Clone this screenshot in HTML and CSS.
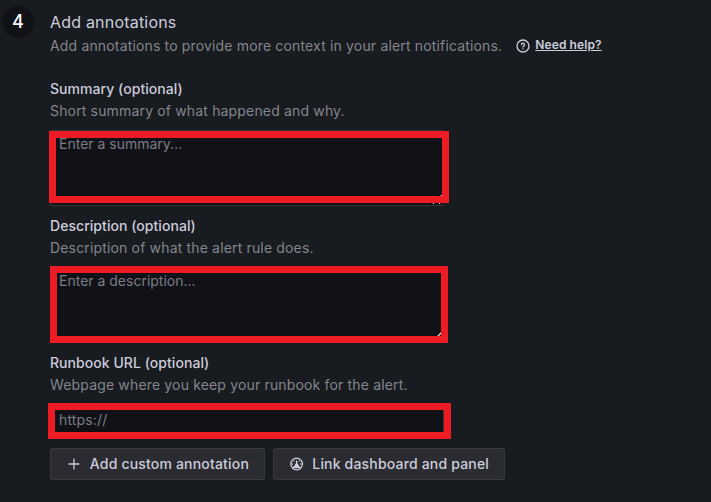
FILE: index.html
```
<!DOCTYPE html>
<html lang="en">
<head>
  <meta charset="UTF-8">
  <title>Add annotations</title>
  <link rel="stylesheet" href="styles.css">
</head>
<body>
  <section class="step">
    <div class="step-number">4</div>
    <div class="step-content">
      <h3>Add annotations</h3>
      <div class="step-info">
        <span class="description">Add annotations to provide more context in your alert notifications.</span>
        <div class="help">
          <svg width="14" height="14" viewBox="0 0 14 14" fill="none" stroke="currentColor">
            <circle cx="7" cy="7" r="6" stroke-width="1.3"/>
            <path d="M5.5 5.6a1.5 1.5 0 1 1 2.3 1.3c-.5.3-.8.5-.8 1.1" stroke-width="1.3" stroke-linecap="round"/>
            <circle cx="7" cy="9.9" r=".75" fill="currentColor" stroke="none"/>
          </svg>
          <a href="#">Need help?</a>
        </div>
      </div>

      <div class="field">
        <label for="summary">Summary (optional)</label>
        <span class="description">Short summary of what happened and why.</span>
        <div class="control">
          <textarea id="summary" placeholder="Enter a summary..."></textarea>
          <svg class="grip" width="12" height="12" viewBox="0 0 12 12">
            <path d="M0 12L12 0V12Z" fill="#000"/>
            <path d="M3 12L12 3M9 12L12 9" stroke="#c8c8c8" stroke-width="1.1"/>
          </svg>
          <div class="highlight highlight-summary"></div>
        </div>
      </div>

      <div class="field">
        <label for="description">Description (optional)</label>
        <span class="description">Description of what the alert rule does.</span>
        <div class="control">
          <textarea id="description" placeholder="Enter a description..."></textarea>
          <svg class="grip" width="12" height="12" viewBox="0 0 12 12">
            <path d="M0 12L12 0V12Z" fill="#000"/>
            <path d="M3 12L12 3M9 12L12 9" stroke="#c8c8c8" stroke-width="1.6"/>
          </svg>
          <div class="highlight highlight-description"></div>
        </div>
      </div>

      <div class="field">
        <label for="runbook">Runbook URL (optional)</label>
        <span class="description">Webpage where you keep your runbook for the alert.</span>
        <div class="control">
          <input id="runbook" type="text" placeholder="https://">
          <div class="highlight highlight-runbook"></div>
        </div>
      </div>

      <div class="buttons">
        <button type="button" class="btn-add">
          <svg width="16" height="16" viewBox="0 0 16 16" fill="none" stroke="currentColor" stroke-width="1.3" stroke-linecap="round">
            <path d="M8 3v10M3 8h10"/>
          </svg>
          Add custom annotation
        </button>
        <button type="button" class="btn-link">
          <svg width="16" height="16" viewBox="0 0 16 16" fill="none" stroke="currentColor" stroke-width="1.4">
            <circle cx="8" cy="8" r="6.1"/>
            <path d="M8 4.8v4M4 12.200L6.700 9.900M12 12.200L9.300 9.900M6 11.700h4" stroke-linecap="round"/>
            <circle cx="8" cy="9.300" r="1.300" fill="currentColor"/>
            <g fill="currentColor" stroke="none">
              <circle cx="5.300" cy="5" r=".7"/>
              <circle cx="10.700" cy="5" r=".7"/>
              <circle cx="3.600" cy="8" r=".8"/>
              <circle cx="12.400" cy="8" r=".8"/>
            </g>
          </svg>
          Link dashboard and panel
        </button>
      </div>
    </div>
  </section>
</body>
</html>
```

FILE: styles.css
```
html, body {
  margin: 0;
  padding: 0;
  height: 100%;
  overflow: hidden;
}

body {
  background-color: #181b1f;
  color: #ccccdc;
  font-family: Inter, sans-serif;
  font-size: 14px;
  line-height: 22px;
  letter-spacing: 0.16px;
}

.step {
  display: flex;
  gap: 16px;
  padding: 6px 0 0 2px;
}

.step-number {
  width: 32px;
  height: 32px;
  border-radius: 50%;
  background-color: #111217;
  color: #fff;
  font-size: 18px;
  font-weight: 500;
  line-height: 32px;
  text-align: center;
}

.step-content {
  padding-top: 5px;
}

h3 {
  margin: 0 0 2px;
  font-size: 16px;
  font-weight: 400;
  line-height: 22px;
  letter-spacing: 0.2px;
}

.step-info {
  display: flex;
  align-items: center;
  gap: 14px;
  margin-bottom: 21px;
}

.description {
  color: #84858e;
}

.help {
  display: flex;
  align-items: center;
  gap: 5px;
}

.help a {
  color: inherit;
  font-size: 12px;
  font-weight: 600;
  line-height: 20px;
  letter-spacing: 0.1px;
  padding-bottom: 2px;
}

.field {
  display: flex;
  flex-direction: column;
  margin-bottom: 9px;
}

label {
  font-weight: 500;
  letter-spacing: 0.05px;
}

.control {
  position: relative;
  display: flex;
  width: 394px;
  margin-top: 8px;
}

textarea, input {
  box-sizing: border-box;
  width: 100%;
  border: 1px solid #34353b;
  border-radius: 2px;
  background-color: #111217;
  color: #ccccdc;
  font: inherit;
  letter-spacing: 0;
  outline: none;
}

textarea {
  height: 76px;
  padding: 2px 8px;
  resize: none;
}

input {
  height: 32px;
  padding: 0 8px 2px;
  letter-spacing: 0.15px;
}

::placeholder {
  color: #7b7c85;
}

.grip {
  position: absolute;
  right: 2px;
  bottom: 2px;
}

/* red frames drawn over the inputs */
.highlight {
  position: absolute;
  border: 7px solid #ed1c24;
  pointer-events: none;
}

.highlight-summary {
  inset: 1px -5px 3px -1px;
}

.highlight-description {
  inset: -1px -4px 0 0;
}

.highlight-runbook {
  inset: -1px -7px -3px -2px;
}

.buttons {
  display: flex;
  gap: 8px;
  margin-top: 12px;
}

button {
  box-sizing: border-box;
  display: flex;
  align-items: center;
  gap: 8px;
  height: 32px;
  padding: 0 15px;
  border: 1px solid #38393f;
  border-radius: 2px;
  background-color: #2b2c31;
  color: #ccccdc;
  font: inherit;
  font-weight: 500;
  letter-spacing: 0.18px;
  white-space: nowrap;
}

.btn-add {
  width: 215px;
}

.btn-link {
  width: 232px;
}
```
